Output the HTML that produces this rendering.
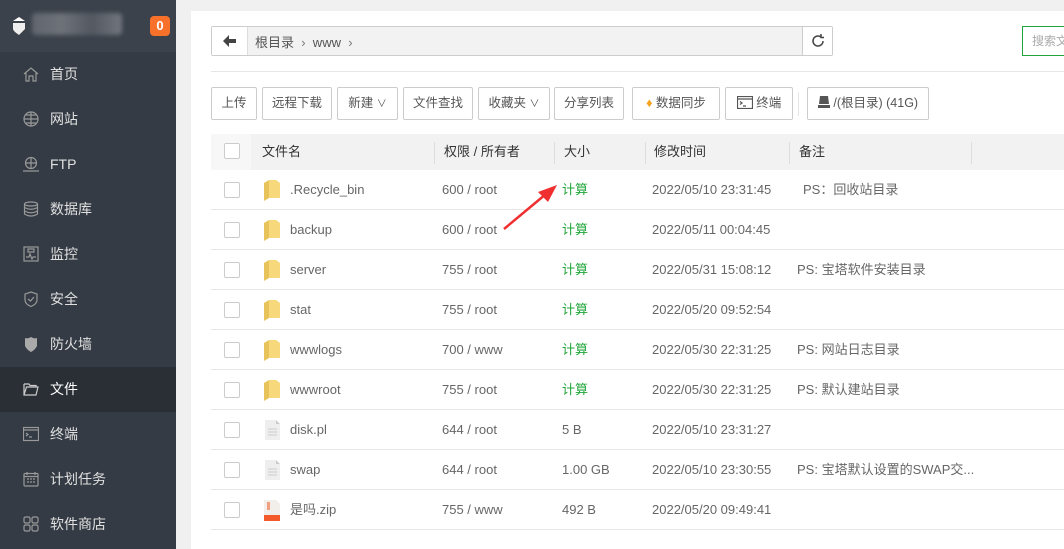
<!DOCTYPE html>
<html><head><meta charset="utf-8"><style>
*{margin:0;padding:0;box-sizing:border-box}
body{width:1064px;height:549px;overflow:hidden;background:#f0f0f0;font-family:"Liberation Sans","Noto Sans CJK SC",sans-serif;font-size:13px;color:#555;position:relative}
.side{position:absolute;left:0;top:0;width:176px;height:549px;background:#343b44}
.logo{height:52px;background:#3c424b;position:relative}
.blur{position:absolute;left:32px;top:13px;width:90px;height:22px;background:linear-gradient(90deg,#6a6f77,#7a7e85,#5a5f67,#7f838a);border-radius:4px;opacity:.8;filter:blur(2px)}
.badge{position:absolute;left:150px;top:16px;width:20px;height:20px;background:#f7712b;border-radius:4px;color:#fff;font-weight:bold;font-size:13px;text-align:center;line-height:20px}
.item{position:absolute;left:0;width:176px;height:45px;color:#e0e0e0;font-size:14px;line-height:45px}
.item span{position:absolute;left:50px}
.item svg{position:absolute;left:23px;top:14px}
.item.act{background:#2a2f36;color:#fff}
.panel{position:absolute;left:191px;top:11px;right:0;bottom:0;background:#fff}
.abs{position:absolute}
.btn{position:absolute;top:87px;height:33px;border:1px solid #ccc;border-radius:2px;background:#fff;line-height:31px;text-align:center;color:#555;font-size:12.5px}
.th{position:absolute;top:134px;left:211px;width:853px;height:36px;background:#f2f2f2}
.sep{position:absolute;top:142px;width:1px;height:22px;background:#ddd}
.cb{position:absolute;left:224px;width:16px;height:16px;border:1px solid #ccc;border-radius:2px;background:#fff}
.row{position:absolute;left:211px;width:853px;height:40px;border-bottom:1px solid #e6e6e6}
.c{position:absolute;top:0;line-height:40px;color:#666}
.g{color:#20a53a}
</style></head><body>
<div class="side">
 <div class="logo">
  <svg class="abs" style="left:11px;top:15px" width="16" height="20" viewBox="0 0 16 20"><path d="M2 6 L8 2 L14 6 Z" fill="#fff"/><path d="M2 8 H14 V14 Q8 20 8 20 Q2 16 2 14 Z" fill="#eee"/></svg>
  <div class="blur"></div><div class="badge">0</div>
 </div>
 <div class="item" style="top:52px"><svg width="16" height="16" viewBox="0 0 16 16" fill="none" stroke="#999" stroke-width="1.2"><path d="M1 8 L8 2 L15 8 M3 7 V15 H6 V10 H10 V15 H13 V7"/></svg><span>首页</span></div>
 <div class="item" style="top:97px"><svg width="16" height="16" viewBox="0 0 16 16" fill="none" stroke="#999" stroke-width="1.2"><circle cx="8" cy="8" r="7"/><path d="M1 8H15M8 1V15M3 4H13M3 12H13"/></svg><span>网站</span></div>
 <div class="item" style="top:142px"><svg width="16" height="16" viewBox="0 0 16 16" fill="none" stroke="#999" stroke-width="1.2"><circle cx="8" cy="7" r="5.5"/><path d="M2.5 7H13.5M8 1.5V12.5M0 15H16"/></svg><span>FTP</span></div>
 <div class="item" style="top:187px"><svg width="16" height="16" viewBox="0 0 16 16" fill="none" stroke="#999" stroke-width="1.2"><ellipse cx="8" cy="3" rx="6.5" ry="2"/><path d="M1.5 3V13Q8 17 14.5 13V3M1.5 6.5Q8 10 14.5 6.5M1.5 10Q8 13.5 14.5 10"/></svg><span>数据库</span></div>
 <div class="item" style="top:232px"><svg width="16" height="16" viewBox="0 0 16 16" fill="none" stroke="#999" stroke-width="1.2"><rect x="1" y="1" width="14" height="14"/><path d="M3 11H6L7 8L9 13L10 11H13M5 3H11V6H5Z"/></svg><span>监控</span></div>
 <div class="item" style="top:277px"><svg width="16" height="16" viewBox="0 0 16 16" fill="none" stroke="#999" stroke-width="1.2"><path d="M8 1L14 3V9Q14 13 8 15.5Q2 13 2 9V3Z M5 8L7.5 10L11 6"/></svg><span>安全</span></div>
 <div class="item" style="top:322px"><svg width="16" height="16" viewBox="0 0 16 16"><path d="M2 2Q5 3 8 1Q11 3 14 2V10Q12 14 8 16Q4 14 2 10Z" fill="#aaa"/></svg><span>防火墙</span></div>
 <div class="item act" style="top:367px"><svg width="16" height="16" viewBox="0 0 16 16" fill="none" stroke="#ccc" stroke-width="1.2"><path d="M1 3H6L7 4.5H13V6M1 3V14H13L15 6H3.5L1 14"/></svg><span>文件</span></div>
 <div class="item" style="top:412px"><svg width="16" height="16" viewBox="0 0 16 16" fill="none" stroke="#999" stroke-width="1.2"><rect x="0.5" y="1.5" width="15" height="13"/><path d="M0.5 4H15.5M3 7L5 8.5L3 10M6 11H9"/></svg><span>终端</span></div>
 <div class="item" style="top:457px"><svg width="16" height="16" viewBox="0 0 16 16" fill="none" stroke="#999" stroke-width="1.2"><rect x="1" y="2.5" width="14" height="12.5" rx="1"/><path d="M1 5.5H15M4 1V4M12 1V4M4 8H6M7 8H9M10 8H12M4 11H6M7 11H9M10 11H12"/></svg><span>计划任务</span></div>
 <div class="item" style="top:502px"><svg width="16" height="16" viewBox="0 0 16 16" fill="none" stroke="#999" stroke-width="1.2"><rect x="1" y="1" width="6" height="6" rx="1.5"/><rect x="9" y="1" width="6" height="6" rx="1.5"/><rect x="1" y="9" width="6" height="6" rx="1.5"/><rect x="9" y="9" width="6" height="6" rx="1.5"/></svg><span>软件商店</span></div>
</div>
<div class="panel"></div>
<div class="abs" style="left:211px;top:26px;width:622px;height:30px;border:1px solid #ccc;background:#f2f2f2;border-radius:2px"></div>
<div class="abs" style="left:212px;top:27px;width:36px;height:28px;background:#fff;border-right:1px solid #ddd"><svg class="abs" style="left:11px;top:8px" width="14" height="12" viewBox="0 0 14 12"><path d="M0 6L6 0V4H13V8H6V12Z" fill="#444"/></svg></div>
<div class="abs" style="left:255px;top:32px;font-size:13px;color:#555">根目录&nbsp;&nbsp;<span style="color:#777">›</span>&nbsp;&nbsp;www&nbsp;&nbsp;<span style="color:#777">›</span></div>
<div class="abs" style="left:802px;top:27px;width:30px;height:28px;background:#fff;border-left:1px solid #ccc"><svg class="abs" style="left:7px;top:6px" width="16" height="16" viewBox="0 0 16 16" fill="none" stroke="#444" stroke-width="1.5"><path d="M13 8A5 5 0 1 1 11 4M11 1V4.5H14"/></svg></div>
<div class="abs" style="left:1022px;top:26px;width:60px;height:30px;border:1px solid #20a53a;color:#aaa;font-size:12px;line-height:28px;padding-left:9px">搜索文</div>
<div class="abs" style="left:211px;top:71px;width:853px;height:1px;background:#e6e6e6"></div>
<div class="btn" style="left:211px;width:46px">上传</div>
<div class="btn" style="left:262px;width:70px">远程下载</div>
<div class="btn" style="left:337px;width:61px">新建 <span style="font-size:10px">∨</span></div>
<div class="btn" style="left:403px;width:70px">文件查找</div>
<div class="btn" style="left:478px;width:72px">收藏夹 <span style="font-size:10px">∨</span></div>
<div class="btn" style="left:554px;width:70px">分享列表</div>
<div class="btn" style="left:632px;width:88px"><span style="color:#f7a21b">♦</span> 数据同步</div>
<div class="btn" style="left:725px;width:68px"><svg style="vertical-align:-2px" width="16" height="13" viewBox="0 0 16 13" fill="none" stroke="#555" stroke-width="1.2"><rect x="0.5" y="0.5" width="15" height="12"/><path d="M0.5 3H15.5M3 5.5L5 7L3 8.5M6 10H9"/></svg> 终端</div>
<div class="abs" style="left:798px;top:92px;width:1px;height:24px;background:#e6e6e6"></div>
<div class="btn" style="left:807px;width:122px"><svg style="vertical-align:-1px" width="12" height="12" viewBox="0 0 12 12"><path d="M2 0H10L11 8H1Z M0 9H12V12H0Z" fill="#555"/></svg> /(根目录) (41G)</div>
<div class="th"><div class="abs" style="left:0;top:0;width:40px;height:36px;background:#f7f7f7"></div></div>
<div class="cb" style="top:143px"></div>
<div class="abs" style="left:262px;top:141px;color:#333">文件名</div>
<div class="sep" style="left:434px"></div><div class="abs" style="left:444px;top:141px;color:#333">权限 / 所有者</div>
<div class="sep" style="left:554px"></div><div class="abs" style="left:564px;top:141px;color:#333">大小</div>
<div class="sep" style="left:645px"></div><div class="abs" style="left:654px;top:141px;color:#333">修改时间</div>
<div class="sep" style="left:789px"></div><div class="abs" style="left:799px;top:141px;color:#333">备注</div>
<div class="sep" style="left:971px"></div>

<div class="row" style="top:170px"><div class="cb" style="left:13px;top:12px"></div><svg class="abs" style="left:53px;top:10px" width="16" height="21" viewBox="0 0 16 21"><path d="M0 3L5 0V18L0 21Z" fill="#e8c25a"/><path d="M5 0H12L16 3V18H5Z" fill="#f7d87a"/></svg><div class="c" style="left:79px">.Recycle_bin</div><div class="c" style="left:231px">600 / root</div><div class="c g" style="left:351px">计算</div><div class="c" style="left:441px">2022/05/10 23:31:45</div><div class="c" style="left:592px">PS：回收站目录</div></div>
<div class="row" style="top:210px"><div class="cb" style="left:13px;top:12px"></div><svg class="abs" style="left:53px;top:10px" width="16" height="21" viewBox="0 0 16 21"><path d="M0 3L5 0V18L0 21Z" fill="#e8c25a"/><path d="M5 0H12L16 3V18H5Z" fill="#f7d87a"/></svg><div class="c" style="left:79px">backup</div><div class="c" style="left:231px">600 / root</div><div class="c g" style="left:351px">计算</div><div class="c" style="left:441px">2022/05/11 00:04:45</div></div>
<div class="row" style="top:250px"><div class="cb" style="left:13px;top:12px"></div><svg class="abs" style="left:53px;top:10px" width="16" height="21" viewBox="0 0 16 21"><path d="M0 3L5 0V18L0 21Z" fill="#e8c25a"/><path d="M5 0H12L16 3V18H5Z" fill="#f7d87a"/></svg><div class="c" style="left:79px">server</div><div class="c" style="left:231px">755 / root</div><div class="c g" style="left:351px">计算</div><div class="c" style="left:441px">2022/05/31 15:08:12</div><div class="c" style="left:586px">PS: 宝塔软件安装目录</div></div>
<div class="row" style="top:290px"><div class="cb" style="left:13px;top:12px"></div><svg class="abs" style="left:53px;top:10px" width="16" height="21" viewBox="0 0 16 21"><path d="M0 3L5 0V18L0 21Z" fill="#e8c25a"/><path d="M5 0H12L16 3V18H5Z" fill="#f7d87a"/></svg><div class="c" style="left:79px">stat</div><div class="c" style="left:231px">755 / root</div><div class="c g" style="left:351px">计算</div><div class="c" style="left:441px">2022/05/20 09:52:54</div></div>
<div class="row" style="top:330px"><div class="cb" style="left:13px;top:12px"></div><svg class="abs" style="left:53px;top:10px" width="16" height="21" viewBox="0 0 16 21"><path d="M0 3L5 0V18L0 21Z" fill="#e8c25a"/><path d="M5 0H12L16 3V18H5Z" fill="#f7d87a"/></svg><div class="c" style="left:79px">wwwlogs</div><div class="c" style="left:231px">700 / www</div><div class="c g" style="left:351px">计算</div><div class="c" style="left:441px">2022/05/30 22:31:25</div><div class="c" style="left:586px">PS: 网站日志目录</div></div>
<div class="row" style="top:370px"><div class="cb" style="left:13px;top:12px"></div><svg class="abs" style="left:53px;top:10px" width="16" height="21" viewBox="0 0 16 21"><path d="M0 3L5 0V18L0 21Z" fill="#e8c25a"/><path d="M5 0H12L16 3V18H5Z" fill="#f7d87a"/></svg><div class="c" style="left:79px">wwwroot</div><div class="c" style="left:231px">755 / root</div><div class="c g" style="left:351px">计算</div><div class="c" style="left:441px">2022/05/30 22:31:25</div><div class="c" style="left:586px">PS: 默认建站目录</div></div>
<div class="row" style="top:410px"><div class="cb" style="left:13px;top:12px"></div><svg class="abs" style="left:54px;top:10px" width="15" height="20" viewBox="0 0 15 20"><path d="M0 0H11L15 4V20H0Z" fill="#eee"/><path d="M11 0V4H15Z" fill="#ccc"/><path d="M3 9H12M3 12H12M3 15H12" stroke="#ccc"/></svg><div class="c" style="left:79px">disk.pl</div><div class="c" style="left:231px">644 / root</div><div class="c" style="left:351px">5 B</div><div class="c" style="left:441px">2022/05/10 23:31:27</div></div>
<div class="row" style="top:450px"><div class="cb" style="left:13px;top:12px"></div><svg class="abs" style="left:54px;top:10px" width="15" height="20" viewBox="0 0 15 20"><path d="M0 0H11L15 4V20H0Z" fill="#eee"/><path d="M11 0V4H15Z" fill="#ccc"/><path d="M3 9H12M3 12H12M3 15H12" stroke="#ccc"/></svg><div class="c" style="left:79px">swap</div><div class="c" style="left:231px">644 / root</div><div class="c" style="left:351px">1.00 GB</div><div class="c" style="left:441px">2022/05/10 23:30:55</div><div class="c" style="left:586px">PS: 宝塔默认设置的SWAP交...</div></div>
<div class="row" style="top:490px"><div class="cb" style="left:13px;top:12px"></div><svg class="abs" style="left:53px;top:10px" width="16" height="21" viewBox="0 0 16 21"><path d="M0 0H12L16 4V21H0Z" fill="#f2eeea"/><rect x="3" y="2" width="3" height="8" fill="#f26a3b" opacity=".6"/><rect x="0" y="15" width="16" height="6" fill="#f25a2b"/></svg><div class="c" style="left:79px">是吗.zip</div><div class="c" style="left:231px">755 / www</div><div class="c" style="left:351px">492 B</div><div class="c" style="left:441px">2022/05/20 09:49:41</div></div>
<svg class="abs" style="left:500px;top:180px" width="62" height="55" viewBox="0 0 62 55"><path d="M4 49L46 14" stroke="#f03030" stroke-width="2.5"/><path d="M57 5L38 12L48 22Z" fill="#f03030"/></svg>
</body></html>
